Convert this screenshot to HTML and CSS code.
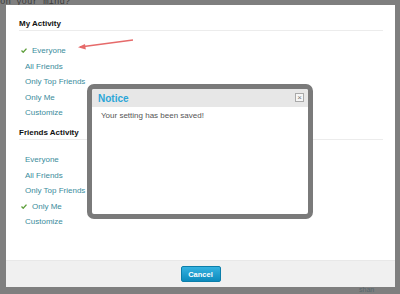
FILE: index.html
```html
<!DOCTYPE html>
<html lang="en">

<head>
    <meta charset="UTF-8">
    <meta name="viewport" content="width=device-width, initial-scale=1.0">
    <title>Privacy Settings</title>
    <link rel="stylesheet" href="styles.css">
</head>

<body>
    <div class="page">
        <div class="page-status">on your mind?</div>
        <div class="page-author">shan</div>
    </div>

    <div class="modal">
        <div class="modal-body">
            <h2 class="section-title">My Activity</h2>
            <ul class="option-list">
                <li class="option selected">
                    <svg class="check" viewBox="0 0 6 5" width="6" height="5"><path d="M0.5 2.6 L2.2 4.2 L5.5 0.6" fill="none" stroke="#5f9f3c" stroke-width="1.4"/></svg>
                    Everyone
                </li>
                <li class="option">All Friends</li>
                <li class="option">Only Top Friends</li>
                <li class="option">Only Me</li>
                <li class="option">Customize</li>
            </ul>

            <h2 class="section-title">Friends Activity</h2>
            <ul class="option-list">
                <li class="option">Everyone</li>
                <li class="option">All Friends</li>
                <li class="option">Only Top Friends</li>
                <li class="option selected">
                    <svg class="check" viewBox="0 0 6 5" width="6" height="5"><path d="M0.5 2.6 L2.2 4.2 L5.5 0.6" fill="none" stroke="#5f9f3c" stroke-width="1.4"/></svg>
                    Only Me
                </li>
                <li class="option">Customize</li>
            </ul>
        </div>
        <div class="modal-footer">
            <button type="button" class="btn-cancel">Cancel</button>
        </div>
    </div>

    <!-- seta vermelha apontando para a opção -->
    <svg class="arrow" width="70" height="20" viewBox="0 0 70 20">
        <path d="M57 1 L4 8" stroke="#e66a6a" stroke-width="1.5" fill="none"/>
        <path d="M2 8.3 L9 5 L9.8 10.6 Z" fill="#e66a6a"/>
    </svg>

    <div class="notice">
        <div class="notice-header">
            <span class="notice-title">Notice</span>
            <span class="notice-close">&times;</span>
        </div>
        <div class="notice-body">Your setting has been saved!</div>
    </div>
</body>

</html>
```

FILE: styles.css
```css
body {
    margin: 0;
    padding: 0;
    font-family: "Liberation Sans", Arial, sans-serif;
    background-color: #7f7f7f;
    width: 400px;
    height: 294px;
    overflow: hidden;
}

.page {
    position: relative;
    height: 294px;
}

.page-status {
    position: absolute;
    left: 0;
    top: -2px;
    font-family: "Liberation Mono", "Courier New", monospace;
    font-size: 9px;
    line-height: 9px;
    color: #3c3c3c;
}

.page-author {
    position: absolute;
    left: 359px;
    top: 286px;
    font-size: 7px;
    color: #56666c;
}

.modal {
    position: absolute;
    left: 6px;
    top: 5px;
    width: 389px;
    height: 282px;
    background-color: #fff;
    display: flex;
    flex-direction: column;
}

.modal-body {
    flex: 1;
    padding: 0 12px 0 13px;
}

.section-title {
    margin: 7.5px 0 0 0;
    font-size: 8px;
    font-weight: bold;
    line-height: 10px;
    color: #111;
    padding-bottom: 1px;
    border-bottom: 1px solid #ececec;
}

.section-title:first-child {
    margin-top: 14px;
}

.option-list {
    list-style: none;
    margin: 0;
    padding: 12px 0 0 0;
}

.option {
    height: 15.5px;
    line-height: 15.5px;
    padding-left: 6px;
    font-size: 8px;
    color: #3b8c9c;
    display: flex;
    align-items: center;
}

.option.selected {
    padding-left: 2px;
}

.check {
    margin-right: 5px;
}

.modal-footer {
    height: 26px;
    background-color: #f0f0f0;
    border-top: 1px solid #e8e8e8;
    display: flex;
    justify-content: center;
    align-items: center;
}

.btn-cancel {
    width: 40px;
    height: 16px;
    padding: 0;
    border: 1px solid #0b7eaa;
    border-radius: 2px;
    background: linear-gradient(#35b2e0, #0c8bbd);
    color: #fff;
    font-family: "Liberation Sans", Arial, sans-serif;
    font-size: 7.5px;
    font-weight: bold;
}

.arrow {
    position: absolute;
    left: 76px;
    top: 39px;
}

.notice {
    position: absolute;
    left: 87px;
    top: 84px;
    width: 216px;
    height: 125px;
    border: 5px solid #7a7a7a;
    border-radius: 7px;
    background-color: #fff;
    overflow: hidden;
}

.notice-header {
    height: 18px;
    background-color: #e7e7e7;
    display: flex;
    align-items: center;
    justify-content: space-between;
    padding: 0 4px 0 6px;
}

.notice-title {
    font-size: 10px;
    font-weight: bold;
    color: #2ba6d8;
}

.notice-close {
    width: 7px;
    height: 7px;
    border: 1px solid #a9a9a9;
    background-color: #f6f6f6;
    color: #777;
    font-size: 8px;
    line-height: 7px;
    text-align: center;
    margin-top: -2px;
}

.notice-body {
    padding: 4px 9px;
    font-size: 8px;
    line-height: 10px;
    color: #555;
}
```
